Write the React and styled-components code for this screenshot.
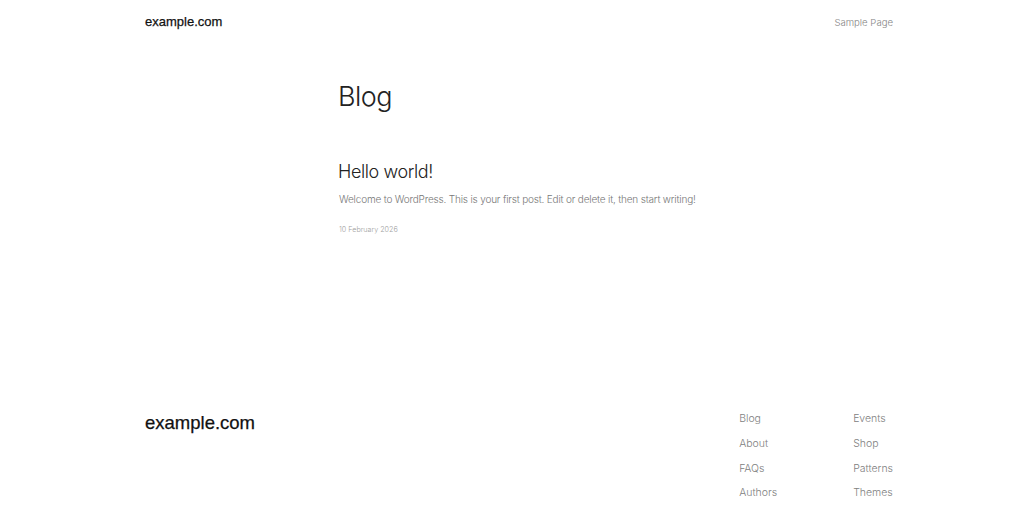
import styled, { createGlobalStyle } from 'styled-components';

const GlobalStyle = createGlobalStyle`
    html, body {
        margin: 0;
        padding: 0;
        background: #ffffff;
    }
    body {
        font-family: Inter, "Noto Sans", sans-serif;
        color: #222;
    }
`

const Page = styled.div`
    min-height: 508px;
    display: flex;
    flex-direction: column;
`

const Container = styled.div`
    padding: 0 131px 0 145px;
`

const Header = styled(Container)`
    height: 44px;
    display: flex;
    align-items: center;
    justify-content: space-between;
`

const SiteTitle = styled.a`
    font-family: "Liberation Sans", Arial, sans-serif;
    font-size: ${props => props.big ? '18.5px' : '13px'};
    font-weight: 400;
    line-height: 1.2;
    margin-top: ${props => props.big ? '5px' : '0'};
    color: #111;
    -webkit-text-stroke: 0.25px #111;
    text-decoration: none;
`

const NavLink = styled.a`
    font-size: 9.6px;
    font-weight: 300;
    color: #858585;
    text-decoration: none;
`

const Main = styled.main`
    width: 360px;
    margin: 0 auto;
    padding: 37px 0 0;
    transform: translateX(7px);
`

const PageTitle = styled.h1`
    margin: 0 0 0 -1px;
    font-size: 27px;
    font-weight: 300;
    letter-spacing: -0.5px;
    line-height: 1.2;
`

const Post = styled.article`
    margin-top: 48px;
`

const PostTitle = styled.h2`
    margin: 0 0 0 -1px;
    font-size: 18px;
    font-weight: 300;
    letter-spacing: -0.4px;
    line-height: 1.2;
`

const Excerpt = styled.p`
    margin: 10px 0 0;
    font-size: 10px;
    font-weight: 300;
    letter-spacing: -0.18px;
    color: #777;
`

const PostDate = styled.div`
    margin-top: 20px;
    font-size: 7.2px;
    font-weight: 300;
    color: #a0a0a0;
`

const Footer = styled(Container)`
    margin-top: auto;
    padding-bottom: 3px;
    display: flex;
    justify-content: space-between;
    align-items: flex-start;
`

const FooterNav = styled.nav`
    display: grid;
    grid-template-columns: 114px auto;
    grid-auto-flow: column;
    grid-template-rows: repeat(4, 24.6px);
    align-items: center;
`

const FooterLink = styled(NavLink)`
    font-size: 10.5px;
    color: #808080;
`

const footerLinks = ['Blog', 'About', 'FAQs', 'Authors', 'Events', 'Shop', 'Patterns', 'Themes'];

const App = function(){
    return(
    <Page>
        <GlobalStyle />
        <Header>
            <SiteTitle href="#">example.com</SiteTitle>
            <NavLink href="#">Sample Page</NavLink>
        </Header>
        <Main>
            <PageTitle>Blog</PageTitle>
            <Post>
                <PostTitle>Hello world!</PostTitle>
                <Excerpt>Welcome to WordPress. This is your first post. Edit or delete it, then start writing!</Excerpt>
                <PostDate>10 February 2026</PostDate>
            </Post>
        </Main>
        <Footer>
            <SiteTitle href="#" big>example.com</SiteTitle>
            <FooterNav>
                {footerLinks.map(link => (
                    <FooterLink href="#" key={link}>{link}</FooterLink>
                ))}
            </FooterNav>
        </Footer>
    </Page>
    );
}

export default App;
